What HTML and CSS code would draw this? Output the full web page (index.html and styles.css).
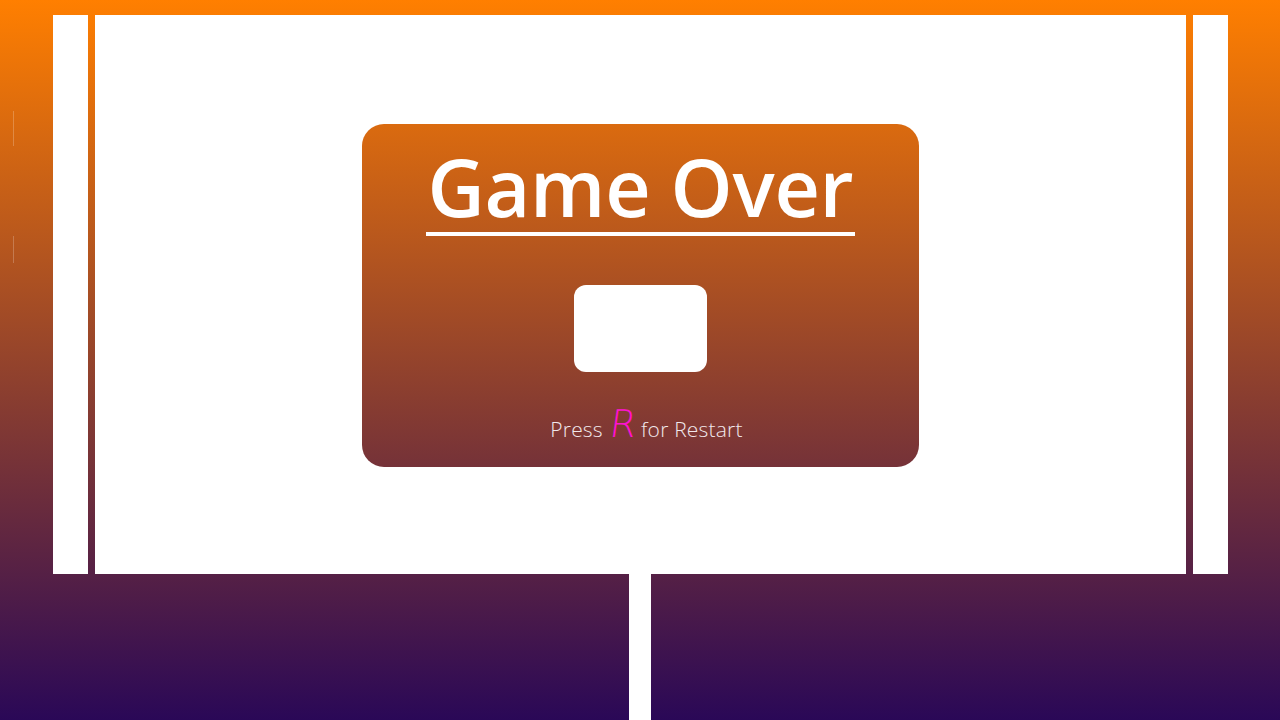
FILE: index.html
```html
<!DOCTYPE html>
<html>
<head>
<meta charset="utf-8">
<link rel="stylesheet" href="styles.css">
</head>
<body>
<div class="marks">
  <span class="mark mark-a"></span>
  <span class="mark mark-b"></span>
</div>
<div class="stage">
  <div class="top-row">
    <div class="side-col"></div>
    <div class="panel">
      <div class="card">
        <h1 class="title">Game Over</h1>
        <div class="button"></div>
        <p class="hint">Press <span class="key">R</span>for Restart</p>
      </div>
    </div>
    <div class="side-col"></div>
  </div>
  <div class="bottom-row">
    <div class="divider"></div>
  </div>
</div>
</body>
</html>
```
FILE: styles.css
```css
html, body {
  margin: 0;
  padding: 0;
}
body {
  width: 1280px;
  height: 720px;
  overflow: hidden;
  background: linear-gradient(180deg, #ff7f00 0%, #2a0857 100%);
  background-attachment: fixed;
  font-family: "Open Sans", "Noto Sans", sans-serif;
  position: relative;
}
.marks {
  position: absolute;
  left: 13px;
  top: 0;
  width: 1px;
  height: 720px;
}
.mark {
  position: absolute;
  left: 0;
  width: 1px;
  background: rgba(255, 255, 255, 0.22);
}
.mark-a { top: 111px; height: 35px; }
.mark-b { top: 236px; height: 27px; }
.stage {
  display: flex;
  flex-direction: column;
  height: 720px;
  padding-top: 15px;
  box-sizing: border-box;
}
.top-row {
  display: flex;
  gap: 7px;
  margin-left: 53px;
  width: 1175px;
  height: 559px;
  flex: none;
}
.side-col {
  width: 35px;
  background: #fff;
}
.panel {
  flex: 1;
  background: #fff;
  display: flex;
  align-items: center;
  justify-content: center;
  padding-top: 2px;
  box-sizing: border-box;
}
.card {
  width: 557px;
  height: 343px;
  box-sizing: border-box;
  border-radius: 22px;
  background: linear-gradient(180deg, #ff7f00 0%, #2a0857 100%);
  background-attachment: fixed;
  display: flex;
  flex-direction: column;
  align-items: center;
  color: #fff;
  padding-top: 18px;
}
.title {
  margin: 0;
  font-family: "Open Sans", sans-serif;
  font-weight: 600;
  font-size: 79px;
  line-height: 90px;
  letter-spacing: -0.3px;
  border-bottom: 4px solid #fff;
  padding: 0 2px;
}
.button {
  width: 133px;
  height: 87px;
  background: #fff;
  border-radius: 12px;
  margin-top: 49px;
}
.hint {
  margin: 42px 0 0 12px;
  font-family: "Open Sans", sans-serif;
  font-weight: 300;
  font-size: 21px;
  color: #f1e8ec;
  line-height: 30px;
  letter-spacing: 0.2px;
}
.key {
  font-family: "DejaVu Sans", sans-serif;
  font-weight: 200;
  font-size: 38px;
  color: #ff12d0;
  line-height: 20px;
  display: inline-block;
  transform: skewX(-8deg);
  margin: 0 5px 0 1px;
}
.bottom-row {
  flex: 1;
  display: flex;
  justify-content: center;
}
.divider {
  width: 22px;
  background: #fff;
}
```
